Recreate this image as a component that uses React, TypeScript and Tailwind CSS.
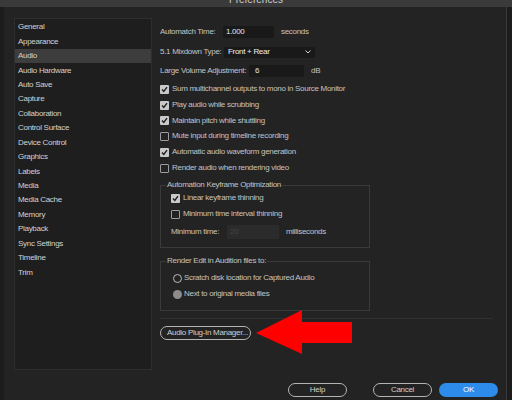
import React from "react";

const sideItems = [
  "General",
  "Appearance",
  "Audio",
  "Audio Hardware",
  "Auto Save",
  "Capture",
  "Collaboration",
  "Control Surface",
  "Device Control",
  "Graphics",
  "Labels",
  "Media",
  "Media Cache",
  "Memory",
  "Playback",
  "Sync Settings",
  "Timeline",
  "Trim",
];

function Check({ on }: { on?: boolean }) {
  if (on) {
    return (
      <span className="w-[9px] h-[9px] rounded-[1px] bg-[#c9c9c9] flex items-center justify-center shrink-0">
        <svg width="7" height="7" viewBox="0 0 7 7">
          <path d="M1 3.6 L2.8 5.4 L6 1.2" fill="none" stroke="#1d1d1d" strokeWidth="1.4" />
        </svg>
      </span>
    );
  }
  return <span className="w-[9px] h-[9px] rounded-[1px] border border-[#9c9c9c] shrink-0" />;
}

function CheckRow({ label, on, h }: { label: string; on?: boolean; h: string }) {
  return (
    <div className={`flex items-center gap-[3px] ${h}`}>
      <Check on={on} />
      <span>{label}</span>
    </div>
  );
}

export default function App() {
  return (
    <div
      className="w-[512px] h-[400px] bg-[#232323] text-[#c4c4c4] text-[8px] tracking-[-0.3px] overflow-hidden flex flex-col"
      style={{ fontFamily: '"Liberation Sans", Arial, sans-serif' }}
    >
      {/* title bar, mostly cut off */}
      <div className="h-[7px] bg-[#3a3a3a] overflow-hidden flex justify-center shrink-0">
        <span className="text-[10px] leading-[10px] -mt-[5px] text-[#cfcfcf] tracking-normal">Preferences</span>
      </div>

      <div className="flex-1 flex flex-col border-l-[4px] border-l-[#1c1c1c] border-r-[6px] border-r-[#1c1c1c]">
        <div className="flex-1 flex flex-col border-r border-[#3a3a3a] w-[503px]">
          <div className="flex">
            {/* sidebar */}
            <div className="ml-[10px] mt-[11px] w-[138px] h-[352px] border border-[#2e2e2e] bg-[#1e1e1e] pt-[1px]">
              {sideItems.map((s) => (
                <div
                  key={s}
                  className={`h-[14.45px] flex items-center pl-[3px] text-[#d2d2d2] ${s === "Audio" ? "bg-[#3d3d3d]" : ""}`}
                >
                  {s}
                </div>
              ))}
            </div>

            {/* settings */}
            <div className="ml-[8px] mt-[17px] w-[333px] flex flex-col">
              <div className="h-[16px] flex items-center">
                <span className="w-[63px]">Automatch Time:</span>
                <span className="w-[51px] h-[12px] bg-[#191919] text-[#e6e6e6] flex items-center pl-[3px]">1.000</span>
                <span className="ml-[7px]">seconds</span>
              </div>
              <div className="h-[16px] flex items-center mt-[4px]">
                <span className="w-[64px]">5.1 Mixdown Type:</span>
                <span className="w-[91px] h-[11px] bg-[#191919] text-[#f0f0f0] flex items-center pl-[4px] pr-[4px] justify-between">
                  <span>Front + Rear</span>
                  <svg width="6" height="4" viewBox="0 0 6 4">
                    <path d="M0.5 0.5 L3 3 L5.5 0.5" fill="none" stroke="#cfcfcf" strokeWidth="1" />
                  </svg>
                </span>
              </div>
              <div className="h-[16px] flex items-center mt-[3px]">
                <span className="w-[89px]">Large Volume Adjustment:</span>
                <span className="w-[55px] h-[12px] bg-[#191919] text-[#e6e6e6] flex items-center pl-[6px]">6</span>
                <span className="ml-[7px]">dB</span>
              </div>

              <div className="mt-[2px] flex flex-col">
                <CheckRow h="h-[16px]" on label="Sum multichannel outputs to mono in Source Monitor" />
                <CheckRow h="h-[16px]" on label="Play audio while scrubbing" />
                <CheckRow h="h-[15px]" on label="Maintain pitch while shuttling" />
                <CheckRow h="h-[16px]" label="Mute input during timeline recording" />
                <CheckRow h="h-[16px]" on label="Automatic audio waveform generation" />
                <CheckRow h="h-[16px]" label="Render audio when rendering video" />
              </div>

              <fieldset className="mt-[3px] w-[210px] border border-[#3a3a3a] pl-[10px] pb-[7px]">
                <legend className="ml-[-5px] px-[1px] h-[12px] leading-[12px]">Automation Keyframe Optimization</legend>
                <CheckRow h="h-[14px]" on label="Linear keyframe thinning" />
                <CheckRow h="h-[16px] mt-[1px]" label="Minimum time interval thinning" />
                <div className="h-[16px] mt-[2px] flex items-center">
                  <span className="w-[56px]">Minimum time:</span>
                  <span className="w-[52px] h-[14px] bg-[#2b2b2b] text-[#444] flex items-center pl-[3px]">20</span>
                  <span className="ml-[7px]">milliseconds</span>
                </div>
              </fieldset>

              <fieldset className="mt-[7px] w-[210px] border border-[#3a3a3a] pl-[12px] pb-[8px]">
                <legend className="ml-[-7px] px-[1px] h-[12px] leading-[12px]">Render Edit in Audition files to:</legend>
                <div className="h-[16px] mt-[3px] flex items-center gap-[2px]">
                  <span className="w-[9px] h-[9px] rounded-full border border-[#bdbdbd]" />
                  <span>Scratch disk location for Captured Audio</span>
                </div>
                <div className="h-[16px] flex items-center gap-[2px]">
                  <span className="w-[9px] h-[9px] rounded-full bg-[#8c8c8c]" />
                  <span>Next to original media files</span>
                </div>
              </fieldset>

              <div className="mt-[7px] h-px bg-[#303030]" />

              <div className="relative mt-[7px] flex">
                <button className="w-[91px] h-[14px] rounded-full border border-[#b4b4b4] text-[#cfcfcf] flex items-center pl-[6px]">
                  Audio Plug-In Manager...
                </button>
                <svg className="absolute left-[96px] top-[-16px]" width="97" height="45" viewBox="0 0 97 45">
                  <polygon points="0,23 46,0 46,12 96,12 96,33 46,33 46,44" fill="#fe0000" />
                </svg>
              </div>
            </div>
          </div>

          <div className="mt-auto mb-[3px] pr-[8px] flex justify-end items-center">
            <button className="w-[59px] h-[14px] rounded-full border border-[#b4b4b4] text-[#cfcfcf] flex items-center justify-center">
              Help
            </button>
            <button className="ml-[26px] w-[59px] h-[14px] rounded-full border border-[#b4b4b4] text-[#cfcfcf] flex items-center justify-center">
              Cancel
            </button>
            <button className="ml-[7px] w-[59px] h-[14px] rounded-full bg-[#2d8ceb] text-white flex items-center justify-center">
              OK
            </button>
          </div>
        </div>
      </div>
    </div>
  );
}
